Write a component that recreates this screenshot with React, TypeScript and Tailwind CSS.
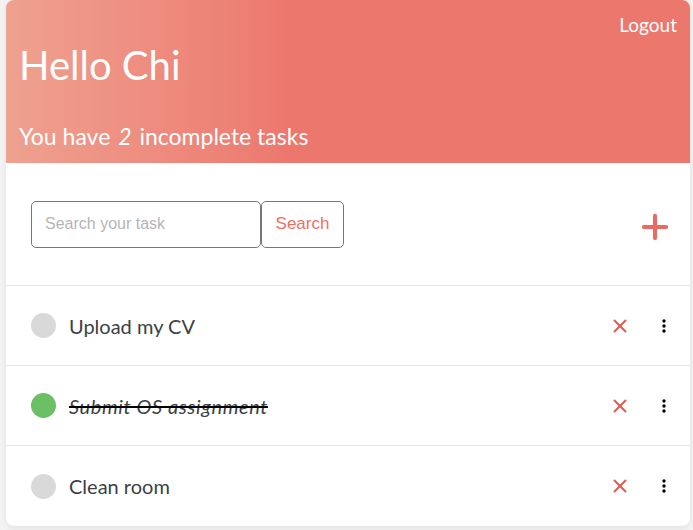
import React from 'react';
import { Plus, X } from 'lucide-react';

type Task = { id: number; title: string; done: boolean };

const tasks: Task[] = [
  { id: 1, title: 'Upload my CV', done: false },
  { id: 2, title: 'Submit OS assignment', done: true },
  { id: 3, title: 'Clean room', done: false },
];

const Kebab: React.FC = () => (
  <svg width="6" height="16" viewBox="0 0 6 16" className="text-black">
    <circle cx="3" cy="3" r="1.7" fill="currentColor" />
    <circle cx="3" cy="8" r="1.7" fill="currentColor" />
    <circle cx="3" cy="13" r="1.7" fill="currentColor" />
  </svg>
);

const App: React.FC = () => {
  const incomplete = tasks.filter(t => !t.done).length;

  return (
    <div className="min-h-screen bg-[#f3f3f3] pl-[6px] pr-[3px] font-['Lato','Noto_Sans',sans-serif]">
      <div className="bg-white rounded-lg shadow-[0_2px_6px_rgba(0,0,0,0.08)] overflow-hidden">
        {/* Header */}
        <div className="h-[163px] bg-[linear-gradient(to_right,#efa18f_0%,#ed8478_30%,#ec776c_42%,#ec776c_100%)] text-white px-[13px] pt-[13px] flex flex-col">
          <div className="flex justify-end">
            <button className="text-[19px] leading-[24px]">Logout</button>
          </div>
          <h1 className="text-[40px] leading-[48px] font-normal mt-[4px]">Hello Chi</h1>
          <p className="text-[23px] leading-[28px] mt-[33px]">
            You have <em className="italic mx-[2px]">{incomplete}</em> incomplete tasks
          </p>
        </div>

        {/* Search */}
        <div className="h-[123px] flex items-center justify-between pl-[25px] pr-[16px] border-b border-[#e3e6ec]">
          <div className="flex">
            <input
              type="text"
              placeholder="Search your task"
              className="w-[230px] h-[47px] border border-[#777] rounded-[5px] px-[13px] text-[16px] font-['Liberation_Sans',Arial,sans-serif] placeholder:text-[#b5b5b5] outline-none"
            />
            <button className="h-[47px] w-[83px] border border-[#777] rounded-[5px] text-[#ec6f62] text-[17px] font-['Liberation_Sans',Arial,sans-serif]">
              Search
            </button>
          </div>
          <button className="text-[#e96a62] mt-[6px]">
            <Plus size={38} strokeWidth={2.6} />
          </button>
        </div>

        {/* Tasks */}
        <ul>
          {tasks.map((t, i) => (
            <li
              key={t.id}
              className={`h-[80px] flex items-center pl-[25px] pr-[23px] ${i < tasks.length - 1 ? 'border-b border-[#e3e6ec]' : ''}`}
            >
              <span className={`w-[25px] h-[25px] rounded-full ${t.done ? 'bg-[#6bbf65]' : 'bg-[#d9d9d9]'}`} />
              <span
                className={`ml-[13px] text-[20px] text-[#3b3f46] flex-1 ${t.done ? 'italic line-through decoration-black decoration-[1.5px] tracking-[0.6px]' : ''}`}
              >
                {t.title}
              </span>
              <button className="text-[#e05a52] mr-[30px]">
                <X size={22} strokeWidth={2.2} />
              </button>
              <button>
                <Kebab />
              </button>
            </li>
          ))}
        </ul>
      </div>
    </div>
  );
};

export default App;
